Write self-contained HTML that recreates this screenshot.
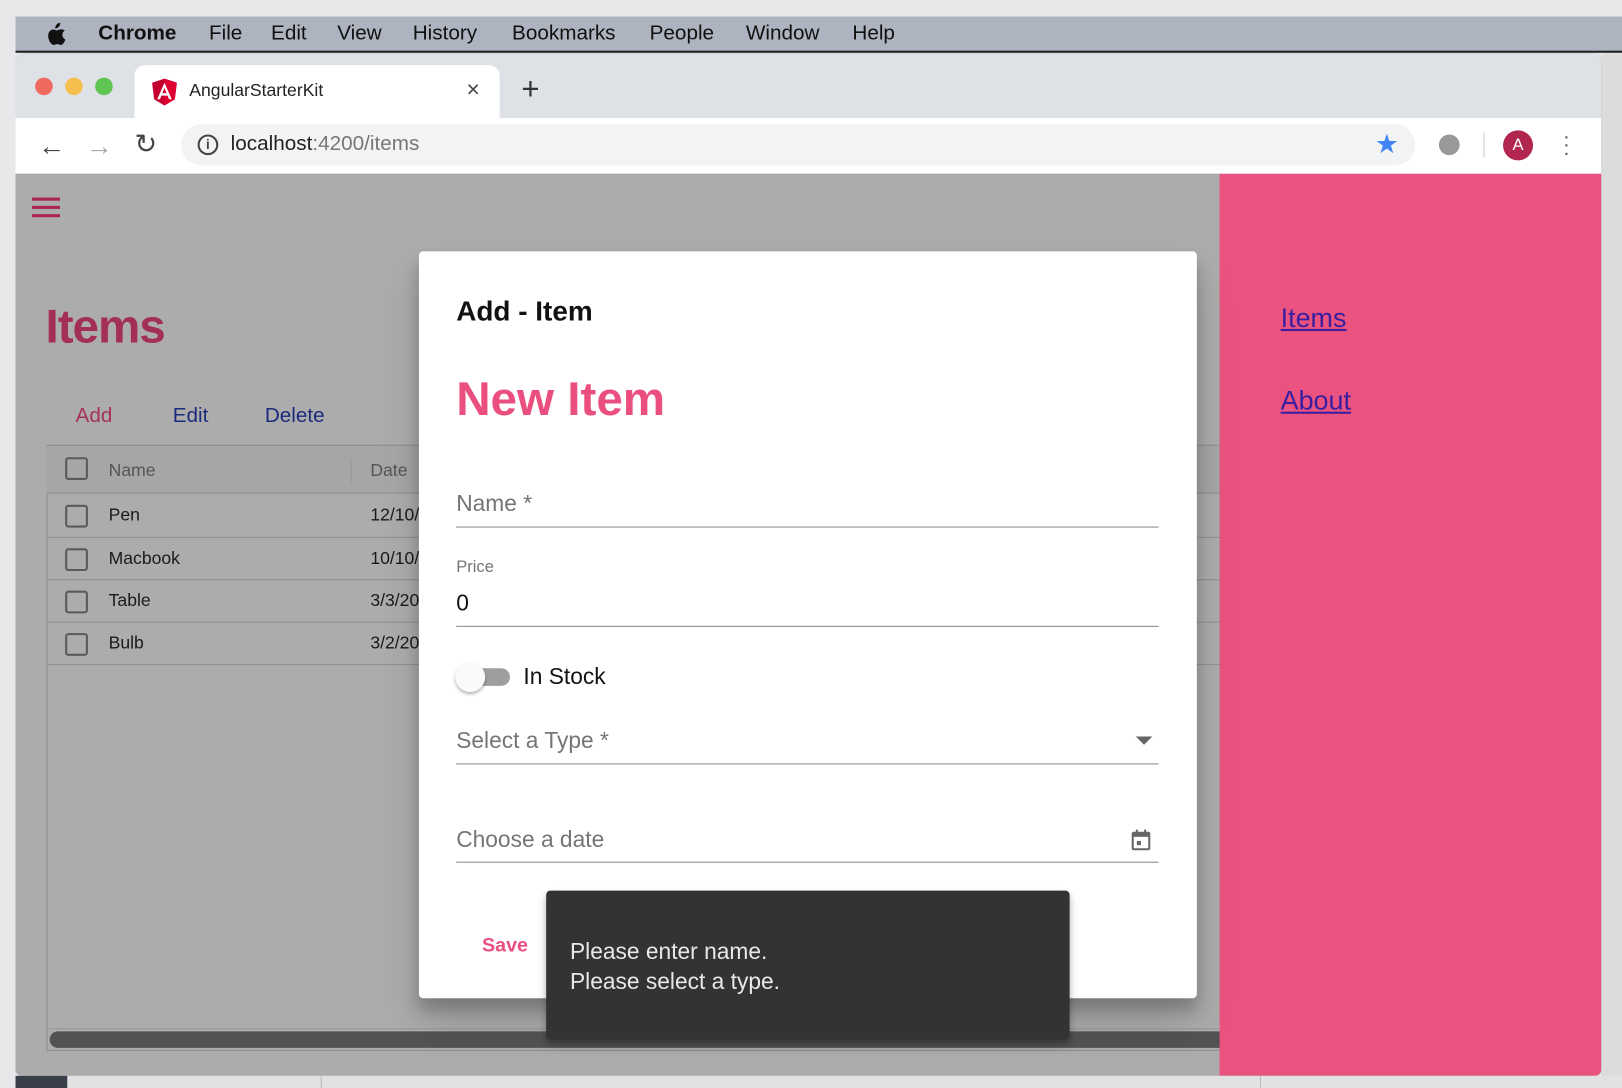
<!DOCTYPE html>
<html><head><meta charset="utf-8"><style>
*{margin:0;padding:0;box-sizing:border-box}
html,body{width:1622px;height:1088px;overflow:hidden;background:#e6e7e9;font-family:"Liberation Sans",sans-serif}
#w{position:absolute;left:0;top:0;width:1568px;height:1052px;transform:scale(1.03444);transform-origin:0 0;background:#e6e7e9}
.a{position:absolute}
.menu span{position:absolute;top:22px;font-size:20px;color:#111}
.row{position:absolute;left:45px;width:1134px;border-bottom:1px solid #8f8f8f;font-size:17px;color:#1a1a1a}
.cb{position:absolute;left:18px;width:22px;height:22px;border:2px solid #5a5a5a;border-radius:3px}
.row .n{position:absolute;left:60px}
.row .d{position:absolute;left:313px}
.lbl{position:absolute;left:441px;font-size:22px;color:#757575}
.ul{position:absolute;left:441px;width:679px;height:1px;background:#8a8a8a}
</style></head><body><div id="w">
<div class="a" style="left:0;top:0;width:15px;height:1052px;background:#e8e8ea"></div>
<div class="a menu" style="left:15px;top:16px;width:1553px;height:35px;background:#adb3bf;border-bottom:2px solid #222">
<svg class="a" style="left:30px;top:6px" width="20" height="22" viewBox="0 0 20 24"><path d="M13.5 0c.2 1.6-.5 3.2-1.4 4.2-1 1.1-2.4 1.9-3.8 1.8-.2-1.5.5-3.1 1.4-4.1C10.7.8 12.2.1 13.5 0zM18.4 8.2c-.2.1-2.7 1.6-2.6 4.6 0 3.6 3.2 4.800 3.2 4.800s-2 5.8-4.700 5.800c-1.500 0-2.100-.9-3.800-.9-1.800 0-2.400.9-3.800.9C4 23.400.8 18.400.8 13.800.8 9.600 3.600 7.100 6.100 7.100c1.600 0 2.900 1 3.800 1 .9 0 2.400-1.100 4.300-1.100.7 0 2.900.1 4.200 1.200z" fill="#111"/></svg>
<span style="left:80px;top:5px;font-weight:bold">Chrome</span>
<span style="left:187px;top:5px">File</span>
<span style="left:247px;top:5px">Edit</span>
<span style="left:311px;top:5px">View</span>
<span style="left:384px;top:5px">History</span>
<span style="left:480px;top:5px">Bookmarks</span>
<span style="left:613px;top:5px">People</span>
<span style="left:706px;top:5px">Window</span>
<span style="left:809px;top:5px">Help</span>
</div>
<div class="a" style="left:1548px;top:52px;width:20px;height:1000px;background:#dcdcdc"></div>
<!-- window -->
<div class="a" style="left:15px;top:52px;width:1533px;height:988px;border-radius:6px;overflow:hidden;background:#acacac">
 <div class="a" style="left:0;top:0;width:1533px;height:62px;background:#dee1e6"></div>
 <div class="a" style="left:19px;top:23px;width:17px;height:17px;border-radius:50%;background:#ee6a5e"></div>
 <div class="a" style="left:48px;top:23px;width:17px;height:17px;border-radius:50%;background:#f5bf4f"></div>
 <div class="a" style="left:77px;top:23px;width:17px;height:17px;border-radius:50%;background:#61c554"></div>
 <div class="a" style="left:115px;top:11px;width:353px;height:52px;background:#fff;border-radius:10px 10px 0 0"></div>
 <svg class="a" style="left:132px;top:24px" width="24" height="26" viewBox="0 0 24 26"><path d="M12 0L0 4l2 16 10 6 10-6 2-16z" fill="#c3002f"/><path d="M12 0v26l10-6 2-16z" fill="#dd0031"/><path d="M12 4L5 20h2.6l1.4-3.5h6l1.4 3.5H19zM10 14l2-5 2 5z" fill="#fff"/></svg>
 <div class="a" style="left:168px;top:26px;font-size:17px;color:#222">AngularStarterKit</div>
 <div class="a" style="left:436px;top:22px;font-size:22px;color:#444">×</div>
 <div class="a" style="left:489px;top:18px;font-size:30px;color:#333">+</div>
 <div class="a" style="left:0;top:62px;width:1533px;height:54px;background:#fff"></div>
 <div class="a" style="left:22px;top:74px;font-size:26px;color:#444">←</div>
 <div class="a" style="left:68px;top:74px;font-size:26px;color:#aaa">→</div>
 <div class="a" style="left:115px;top:72px;font-size:26px;color:#444">↻</div>
 <div class="a" style="left:160px;top:68px;width:1193px;height:40px;background:#f1f3f4;border-radius:20px"></div>
 <div class="a" style="left:176px;top:78px;width:20px;height:20px;border:2px solid #444;border-radius:50%;font-size:13px;text-align:center;line-height:16px;font-weight:bold;color:#444">i</div>
 <div class="a" style="left:208px;top:76px;font-size:20px;color:#222">localhost<span style="color:#777">:4200/items</span></div>
 <div class="a" style="left:1314px;top:72px;font-size:26px;color:#4285f4">★</div>
 <div class="a" style="left:1376px;top:78px;width:20px;height:20px;border-radius:50%;background:#999"></div>
 <div class="a" style="left:1419px;top:76px;width:1px;height:24px;background:#ccc"></div>
 <div class="a" style="left:1438px;top:74px;width:29px;height:29px;border-radius:50%;background:#b0264f;color:#fff;text-align:center;line-height:29px;font-size:16px">A</div>
 <div class="a" style="left:1496px;top:76px;font-size:20px;color:#555;line-height:8px">·<br>·<br>·</div>
 <!-- content -->
 <div class="a" style="left:0;top:116px;width:1164px;height:872px;background:#acacac"></div>
 <div class="a" style="left:16px;top:139px;width:27px;height:3px;background:#ad2452;box-shadow:0 8px 0 #ad2452,0 16px 0 #ad2452"></div>
 <div class="a" style="left:29px;top:236px;font-size:46px;font-weight:bold;color:#a32e58;letter-spacing:-1px">Items</div>
 <div class="a" style="left:58px;top:339px;font-size:20px;color:#a8305a">Add</div>
 <div class="a" style="left:152px;top:339px;font-size:20px;color:#1c2a7c">Edit</div>
 <div class="a" style="left:241px;top:339px;font-size:20px;color:#1c2a7c">Delete</div>
 <div class="a" style="left:30px;top:378px;width:1140px;height:586px;border:1px solid #8f8f8f"></div>
 <div class="row" style="left:30px;top:378px;height:47px;background:#a6a6a6;border-top:1px solid #8f8f8f;color:#555"><div class="cb" style="top:11px"></div><span class="n" style="top:14px">Name</span><span class="a" style="left:294px;top:12px;width:1px;height:24px;background:#999"></span><span class="d" style="top:14px">Date</span></div>
 <div class="row" style="left:30px;top:425px;height:43px"><div class="cb" style="top:11px"></div><span class="n" style="top:11px">Pen</span><span class="d" style="top:11px">12/10/</span></div>
 <div class="row" style="left:30px;top:468px;height:41px"><div class="cb" style="top:10px"></div><span class="n" style="top:10px">Macbook</span><span class="d" style="top:10px">10/10/</span></div>
 <div class="row" style="left:30px;top:509px;height:41px"><div class="cb" style="top:10px"></div><span class="n" style="top:10px">Table</span><span class="d" style="top:10px">3/3/20</span></div>
 <div class="row" style="left:30px;top:550px;height:41px"><div class="cb" style="top:10px"></div><span class="n" style="top:10px">Bulb</span><span class="d" style="top:10px">3/2/20</span></div>
 <div class="a" style="left:30px;top:942px;width:1140px;height:22px;border-top:1px solid #999"></div>
 <div class="a" style="left:33px;top:945px;width:1140px;height:16px;border-radius:8px;background:#535353"></div>
 <div class="a" style="left:1164px;top:116px;width:369px;height:872px;background:#ea5280"></div>
 <div class="a" style="left:1223px;top:240px;font-size:26px;color:#3a1ea0;text-decoration:underline">Items</div>
 <div class="a" style="left:1223px;top:320px;font-size:26px;color:#3a1ea0;text-decoration:underline">About</div>
</div>
<!-- dialog -->
<div class="a" style="left:405px;top:243px;width:752px;height:722px;background:#fff;border-radius:4px;box-shadow:0 11px 15px rgba(0,0,0,.2),0 24px 38px rgba(0,0,0,.14)"></div>
<div class="a" style="left:441px;top:286px;font-size:27px;font-weight:bold;color:#111">Add - Item</div>
<div class="a" style="left:441px;top:358px;font-size:46px;font-weight:bold;color:#ea4f80">New Item</div>
<div class="lbl" style="top:474px">Name *</div>
<div class="ul" style="top:509px"></div>
<div class="a" style="left:441px;top:540px;font-size:16px;color:#757575">Price</div>
<div class="a" style="left:441px;top:570px;font-size:22px;color:#111">0</div>
<div class="ul" style="top:605px"></div>
<div class="a" style="left:446px;top:646px;width:47px;height:17px;border-radius:9px;background:#9e9e9e"></div>
<div class="a" style="left:440px;top:640px;width:29px;height:29px;border-radius:50%;background:#fafafa;box-shadow:0 2px 3px rgba(0,0,0,.3)"></div>
<div class="a" style="left:506px;top:641px;font-size:22px;color:#111">In Stock</div>
<div class="lbl" style="top:703px">Select a Type *</div>
<div class="a" style="left:1098px;top:712px;width:0;height:0;border-left:8px solid transparent;border-right:8px solid transparent;border-top:8px solid #666"></div>
<div class="ul" style="top:738px"></div>
<div class="lbl" style="top:799px">Choose a date</div>
<svg class="a" style="left:1093px;top:801px" width="20" height="22" viewBox="0 0 20 22"><rect x="2" y="4" width="16" height="16" rx="1" fill="none" stroke="#666" stroke-width="2"/><rect x="2" y="4" width="16" height="4" fill="#666"/><rect x="5" y="1" width="2" height="4" fill="#666"/><rect x="13" y="1" width="2" height="4" fill="#666"/><rect x="6" y="12" width="4" height="4" fill="#666"/></svg>
<div class="ul" style="top:833px"></div>
<div class="a" style="left:466px;top:904px;font-size:19px;font-weight:bold;color:#ea4f80">Save</div>
<div class="a" style="left:528px;top:861px;width:506px;height:144px;background:#333;border-radius:4px;box-shadow:0 3px 5px rgba(0,0,0,.2),0 6px 10px rgba(0,0,0,.14)"></div>
<div class="a" style="left:551px;top:905px;font-size:22px;color:#e8e8e8;line-height:29px">Please enter name.<br>Please select a type.</div>
<!-- below window -->
<div class="a" style="left:15px;top:1040px;width:1553px;height:12px;background:#e2e2e2"></div>
<div class="a" style="left:15px;top:1040px;width:50px;height:12px;background:#3a3f4a"></div>
<div class="a" style="left:310px;top:1040px;width:1px;height:12px;background:#bbb"></div>
<div class="a" style="left:1218px;top:1040px;width:1px;height:12px;background:#bbb"></div>
<div class="a" style="left:335px;top:1040px;height:12px;overflow:hidden;font-size:20px;color:#222;line-height:42px">How do you take a screenshot on a Mac without a keyboard?</div>
</div></body></html>
